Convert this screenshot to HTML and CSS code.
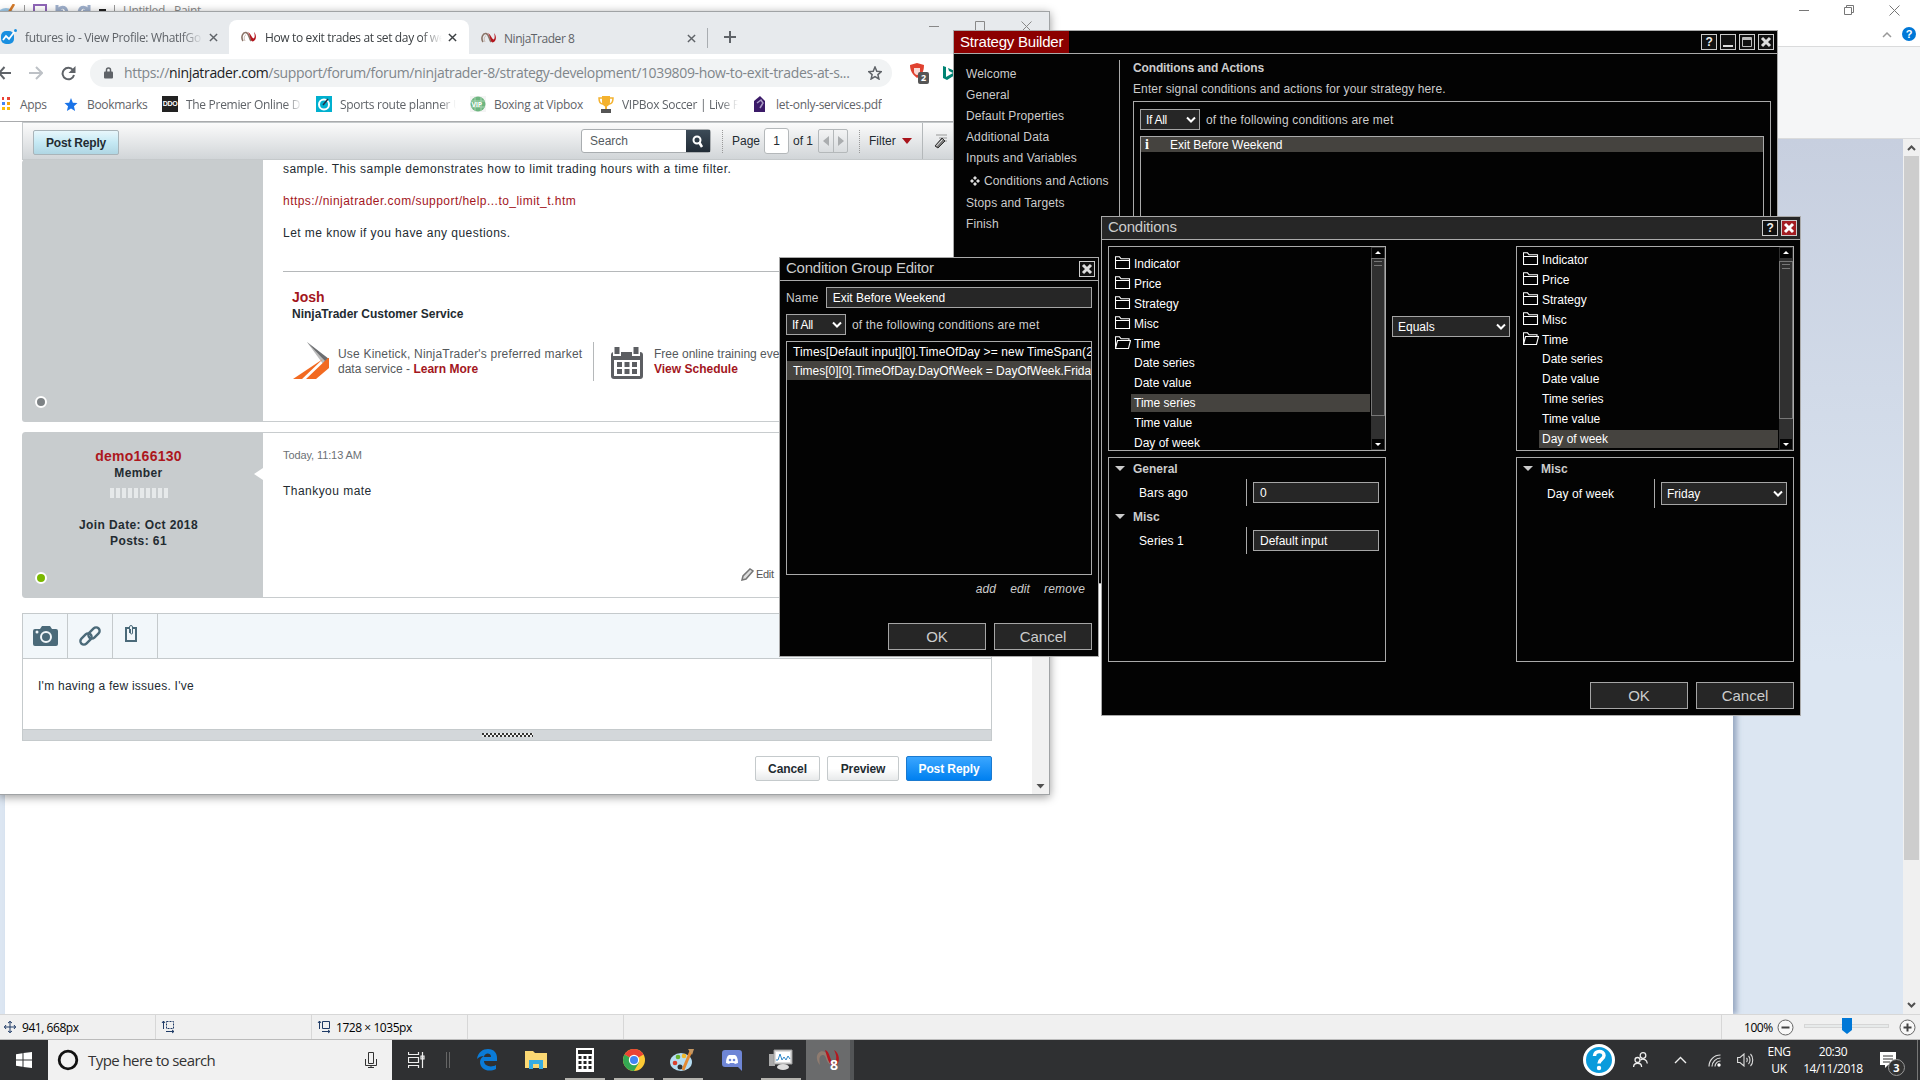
FILE: index.html
```html
<!DOCTYPE html>
<html lang="en">
<head>
  <meta charset="UTF-8" />
  <title>Desktop</title>
  <link rel="stylesheet" href="styles.css">
</head>
<body>
  <!-- shared icons -->
  <svg class="sprite">
    <symbol id="folder" viewBox="0 0 16 14"><path d="M.5 12.5V.8h4l1.6 2h8.4v9.7zM.5 4.5h14" fill="none" stroke="#fff" stroke-width="1.1"/></symbol>
    <symbol id="folder-open" viewBox="0 0 16 14"><path d="M.5 12.5V.8h4l1.6 2h7.9v1.7M.5 12.5l2-8h13l-2 8z" fill="none" stroke="#fff" stroke-width="1.1"/></symbol>
    <symbol id="chev" viewBox="0 0 10 8"><path d="M1 1.5l4 4 4-4" fill="none" stroke="#fff" stroke-width="2"/></symbol>
    <symbol id="cross" viewBox="0 0 10 10"><path d="M1 1l8 8M9 1L1 9" fill="none" stroke="currentColor" stroke-width="1.6"/></symbol>
    <symbol id="ninja" viewBox="0 0 16 14"><path d="M2 11C-.5 7 2 2 5 2.500C8 3 8 8 10 11" fill="none" stroke="#8a7468" stroke-width="1.600"/><path d="M4 11C2.500 8 3.500 5 5 5" fill="none" stroke="#c9b9b0"/><path d="M6.500 2C9 3 9 11 11.500 11.500C15.500 11 16 5 13 2C14 5 14 8 12.500 8.500C11 8 9.500 3 6.500 2z" fill="#b3161e"/></symbol>
  </svg>

  <div class="desktop">
    <!-- Paint -->
    <div class="paint">
      <div class="paint-title">
        <div class="quick">
          <svg width="16" height="16"><ellipse cx="6" cy="10" rx="8" ry="6" fill="#9fc9e8"/><circle cx="4" cy="9" r="2" fill="#3c9b3a"/><circle cx="9" cy="9" r="2" fill="#d9a12c"/><path d="M8 10l6-10" stroke="#d57b2a" stroke-width="2.500"/></svg>
          <i></i>
          <svg width="14" height="14"><path d="M1 1h12v12H1z" fill="#fff" stroke="#8f66b8" stroke-width="2"/></svg>
          <svg width="14" height="14"><path d="M2 1v6h6M3 6c4-5 9-3 9 4" fill="none" stroke="#9fb0cc" stroke-width="3"/></svg>
          <svg width="14" height="14"><path d="M12 1v6H6M11 6C7 1 2 3 2 10" fill="none" stroke="#9fb0cc" stroke-width="3"/></svg>
          <b></b>
          <i></i>
          <span>Untitled - Paint</span>
        </div>
        <div class="paint-controls">
          <svg width="11" height="11"><path d="M0 5.500h10" stroke="#777"/></svg>
          <svg width="11" height="11"><path d="M.5 2.500h7v7h-7zM2.500 2.500v-2h7v7h-2" fill="none" stroke="#777"/></svg>
          <svg width="11" height="11"><path d="M.5.5l10 10M10.500.5l-10 10" stroke="#777"/></svg>
        </div>
      </div>
      <div class="paint-tabs">
        <svg width="10" height="7"><path d="M1 6l4-4 4 4" fill="none" stroke="#999" stroke-width="1.500"/></svg>
        <span class="help-dot">?</span>
      </div>
      <div class="ribbon"></div>
      <div class="work">
        <div class="canvas"></div>
        <div class="scroll">
          <svg width="17" height="17"><path d="M5 11l3.500-3.500L12 11" fill="none" stroke="#505050" stroke-width="2"/></svg>
          <div class="scroll-thumb"></div>
          <svg width="17" height="17"><path d="M5 6l3.500 3.500L12 6" fill="none" stroke="#505050" stroke-width="2"/></svg>
        </div>
      </div>
      <div class="status">
        <div class="cell first"><svg width="12" height="12"><path d="M0 6h12M6 0v12M2 4L.5 6 2 8M10 4l1.500 2L10 8M4 2L6 .5 8 2M4 10l2 1.500L8 10" fill="none" stroke="#1f3b66"/></svg><span>941, 668px</span></div>
        <div class="cell"><svg width="15" height="14"><path d="M2.500 1v8M1 3l1.500-2L4 3M5 11.500h8M11 10l2 1.500-2 1.500" fill="none" stroke="#1f3b66"/><path d="M5.500 1.500h7v7h-7z" fill="none" stroke="#1f3b66" stroke-dasharray="2 1"/></svg></div>
        <div class="cell"><svg width="15" height="14"><path d="M2.500 1v8M1 3l1.500-2L4 3M5 11.500h8M11 10l2 1.500-2 1.500M5.500 1.500h7v7h-7z" fill="none" stroke="#1f3b66"/></svg><span>1728 × 1035px</span></div>
        <div class="cell"></div>
        <div class="zoom">
          <span>100%</span>
          <svg width="17" height="17"><circle cx="8.500" cy="8.500" r="7.500" fill="#f8f8f8" stroke="#666"/><path d="M4.500 8.500h8" stroke="#444" stroke-width="2"/></svg>
          <div class="slider"><b></b></div>
          <svg width="17" height="17"><circle cx="8.500" cy="8.500" r="7.500" fill="#f8f8f8" stroke="#666"/><path d="M4.500 8.500h8M8.500 4.500v8" stroke="#444" stroke-width="2"/></svg>
        </div>
      </div>
    </div>

    <!-- Chrome -->
    <div class="chrome">
      <div class="tabs">
        <div class="tab tab-one">
          <svg width="16" height="16"><rect x="0" y="2" width="13" height="13" rx="5" fill="#1a8fe0"/><path d="M2 11l3-4 3 3 6-8" fill="none" stroke="#fff" stroke-width="1.800"/><circle cx="14.500" cy="1.500" r="1.500" fill="#1a8fe0"/></svg>
          <span>futures io - View Profile: WhatIfGo</span>
          <svg class="x" width="9" height="9"><use href="#cross"/></svg>
        </div>
        <div class="tab active">
          <svg width="16" height="14"><use href="#ninja"/></svg>
          <span>How to exit trades at set day of we</span>
          <svg class="x" width="9" height="9"><use href="#cross"/></svg>
        </div>
        <div class="tab tab-three">
          <svg width="16" height="14"><use href="#ninja"/></svg>
          <span>NinjaTrader 8</span>
          <svg class="x" width="9" height="9"><use href="#cross"/></svg>
        </div>
        <svg class="plus" width="12" height="12"><path d="M6 0v12M0 6h12" stroke="#5f6368" stroke-width="2"/></svg>
        <div class="chrome-controls">
          <svg width="11" height="11"><path d="M0 5.500h10" stroke="#888"/></svg>
          <svg width="11" height="11"><path d="M.5.5h9v9h-9z" fill="none" stroke="#888"/></svg>
          <svg width="11" height="11"><path d="M.5.500l10 10M10.500.5l-10 10" stroke="#888"/></svg>
        </div>
      </div>
      <div class="address">
        <svg width="12" height="14"><path d="M0 7h11M-1 7l5.500-6M-1 7l5.500 6" fill="none" stroke="#5f6368" stroke-width="2"/></svg>
        <svg class="fwd" width="14" height="14"><path d="M0 7h13M7 1l6 6-6 6" fill="none" stroke="#bdc1c6" stroke-width="2"/></svg>
        <svg class="reload" width="15" height="15"><path d="M12 4A5.800 5.800 0 1 0 13 9" fill="none" stroke="#5f6368" stroke-width="2"/><path d="M14.500 0v7h-7z" fill="#5f6368"/></svg>
        <div class="omnibox">
          <svg width="9" height="12"><path d="M2.500 5V3a2 2 0 0 1 4 0v2" fill="none" stroke="#5f6368" stroke-width="1.500"/><rect x="0" y="4.500" width="9" height="7" rx="1" fill="#5f6368"/></svg>
          <span class="url">https://<b>ninjatrader.com</b>/support/forum/forum/ninjatrader-8/strategy-development/1039809-how-to-exit-trades-at-s...</span>
          <svg class="star" width="14" height="14" viewBox="0 0 14 14"><path d="M7 1l1.800 4.200 4.500.4-3.400 3 1 4.400L7 10.700 3.100 13l1-4.400-3.400-3 4.500-.4z" fill="none" stroke="#5f6368" stroke-width="1.500"/></svg>
        </div>
        <div class="ext">
          <svg width="22" height="22"><path d="M7 1l7 2c0 6-2 10-7 13C3 13 0 9 0 3z" fill="#e0412f"/><path d="M4 6h6v4c0 1-2 3-3 3s-3-2-3-3z" fill="#fff" opacity=".8"/></svg>
          <b>2</b>
        </div>
        <svg class="bing" width="12" height="14"><path d="M0 0l3 1v10l7-4-4-2-1-3 7 3v4l-8 5-4-2z" fill="#008373"/></svg>
      </div>
      <div class="bookmarks">
        <div class="mark apps"><svg width="10" height="14"><path d="M0 0h2v3H0zM5 0h3v3H5z" fill="#ea4335"/><path d="M0 5h3v3H0z" fill="#4285f4"/><path d="M5 5h3v3H5z" fill="#f4a30b"/><path d="M0 10h3v3H0zM5 10h3v3H5z" fill="#fbbc05"/></svg><span>Apps</span></div>
        <div class="mark book"><svg width="14" height="13" viewBox="0 0 14 14"><path d="M7 0l2 5 5 .4-3.800 3.400L11.400 14 7 11.200 2.600 14l1.200-5.200L0 5.400 5 5z" fill="#1a73e8"/></svg><span>Bookmarks</span></div>
        <div class="mark ddo"><b>DDO</b><span>The Premier Online D</span></div>
        <div class="mark sport"><svg width="16" height="16"><rect width="16" height="16" fill="#00b0cf"/><circle cx="8" cy="8.500" r="5" fill="none" stroke="#fff" stroke-width="2"/><path d="M7 9l5-6" stroke="#234" stroke-width="1.500"/></svg><span>Sports route planner U</span></div>
        <div class="mark box"><svg width="16" height="16"><rect width="16" height="16" fill="#f4f4f4"/><circle cx="8" cy="8" r="7.500" fill="#6db57f"/><path d="M1 5h14M1 11h14M5 1v14M11 1v14" stroke="#a9d4b3"/><text x="1.500" y="10.500" font-size="7" font-weight="bold" fill="#fff">VIP</text></svg><span>Boxing at Vipbox</span></div>
        <div class="mark cup"><svg width="16" height="17"><path d="M4 0h8v6c0 3-2 4-4 5-2-1-4-2-4-5zM1 2h3M12 2h3M7 10h2v4H7z" fill="#f4b22e"/><path d="M4 2H1c0 4 1 6 4 6M12 2h3c0 4-1 6-4 6" fill="none" stroke="#f4b22e" stroke-width="1.500"/><path d="M3 13h10v4H3z" fill="#555"/></svg><span>VIPBox Soccer | Live F</span></div>
        <div class="mark pdf"><svg width="12" height="16"><path d="M0 5l6-5 5 5v11H0z" fill="#3b1a68"/><path d="M3 7l4-3 2 3-3 5" fill="none" stroke="#a99bc5" stroke-width="1.500"/></svg><span>let-only-services.pdf</span></div>
      </div>
      <div class="page">
        <div class="forum">
          <div class="forum-bar">
            <span class="reply-btn">Post Reply</span>
            <div class="search"><span>Search</span><b><svg width="12" height="13"><circle cx="5" cy="5" r="3.500" fill="none" stroke="#fff" stroke-width="2"/><path d="M7 7l3 5" stroke="#fff" stroke-width="2.500"/></svg></b></div>
            <i class="dots"></i>
            <span class="pg">Page</span><span class="pg-num">1</span><span class="pg-of">of 1</span>
            <div class="pager"><svg width="14" height="22"><path d="M10 6v10L4 11z" fill="#aaadaf"/></svg><svg width="14" height="22"><path d="M4 6v10l6-5z" fill="#aaadaf"/></svg></div>
            <i class="dots"></i>
            <span class="filter">Filter</span><i class="tri-red"></i>
            <div class="gavel"><svg width="14" height="16"><path d="M2 2h11M5 5h8M8 8h5" stroke="#999"/><path d="M1 13l7-8 3 3-7 7z" fill="#777" stroke="#333"/><path d="M2.500 13l6-6.500" stroke="#eee"/></svg></div>
          </div>
          <div class="post post-one">
            <div class="author"><i class="dot"></i></div>
            <div class="body">
              <p>sample. This sample demonstrates how to limit trading hours with a time filter.</p>
              <p class="link">https://ninjatrader.com/support/help...to_limit_t.htm</p>
              <p>Let me know if you have any questions.</p>
              <div class="sig">
                <h4>Josh</h4>
                <h5>NinjaTrader Customer Service</h5>
                <div class="promo">
                  <svg width="37" height="38"><path d="M14 0l22 17v7l-5-3z" fill="#6b6d70"/><path d="M14 0l18 19-2 3z" fill="#bbb"/><path d="M36 16v10L23 37H13l22-21zM30 17L9 37H0z" fill="#f26a21"/></svg>
                  <div class="promo-text kin"><span>Use Kinetick, NinjaTrader's preferred market</span><br>data service - <b>Learn More</b></div>
                  <div class="promo-line"></div>
                  <svg width="32" height="33"><path d="M3 5h26a3 3 0 0 1 3 3v21a3 3 0 0 1-3 3H3a3 3 0 0 1-3-3V8a3 3 0 0 1 3-3z" fill="#5c5e62"/><path d="M3 13h26v16H3z" fill="#fff"/><path d="M6 3v6M25 3v6" stroke="#fff" stroke-width="8"/><path d="M6 0v7M25 0v7" stroke="#5c5e62" stroke-width="5"/><path d="M6 15h5v5H6zM13.500 15h5v5h-5zM21 15h5v5h-5zM6 22h5v5H6zM13.500 22h5v5h-5zM21 22h5v5h-5z" fill="#5c5e62"/></svg>
                  <div class="promo-text">Free online training events<br><b>View Schedule</b></div>
                </div>
              </div>
            </div>
          </div>
          <div class="post post-two">
            <div class="author">
              <div class="user">demo166130</div>
              <div class="rank">Member</div>
              <div class="rep"></div>
              <div class="rank">Join Date: Oct 2018<br>Posts: 61</div>
              <i class="dot online"></i>
              <i class="notch"></i>
            </div>
            <div class="body">
              <div class="when">Today, 11:13 AM</div>
              <p>Thankyou mate</p>
              <div class="edit"><svg width="13" height="13"><path d="M1 12l1-4L9 1l3 2-7 8z" fill="#ddd" stroke="#777" stroke-width="1.500"/></svg>Edit</div>
            </div>
          </div>
          <div class="editor">
            <div class="editor-bar">
              <span><svg width="25" height="20"><path d="M2 3h5l2-3h8l2 3h4a2 2 0 0 1 2 2v13a2 2 0 0 1-2 2H2a2 2 0 0 1-2-2V5a2 2 0 0 1 2-2z" fill="#4b6a79"/><circle cx="13" cy="11" r="5" fill="none" stroke="#f2f7fa" stroke-width="2"/><circle cx="4" cy="6" r="1.500" fill="#f2f7fa"/></svg></span>
              <span><svg width="24" height="20" viewBox="0 0 24 20"><g fill="none" stroke="#4b6a79" stroke-width="2.400"><rect x="-6.500" y="-3.500" width="13" height="7" rx="3.500" transform="translate(8 13) rotate(-45)"/><rect x="-6.500" y="-3.500" width="13" height="7" rx="3.500" transform="translate(16 7) rotate(-45)"/></g></svg></span>
              <span><svg class="clip" width="13" height="17"><path d="M1 3h10v13H1z" fill="none" stroke="#4b6a79" stroke-width="2"/><path d="M4.500 8V2a1.500 1.500 0 0 1 3 0v6a1 1 0 0 1-2 0V4" fill="#f2f7fa" stroke="#4b6a79"/></svg></span>
            </div>
            <div class="editor-text">I'm having a few issues. I've</div>
            <div class="grip"><i></i></div>
          </div>
          <div class="actions"><span>Cancel</span><span class="preview">Preview</span><span class="primary">Post Reply</span></div>
        </div>
        <div class="page-scroll"><svg width="17" height="17"><path d="M4.500 7h8l-4 4.500z" fill="#505050"/></svg></div>
      </div>
    </div>

    <!-- Strategy Builder -->
    <div class="nt strategy">
      <div class="nt-title"><span class="red">Strategy Builder</span>
        <div class="nt-btns"><b>?</b><b><svg width="14" height="14"><path d="M2 11h10" stroke="#ddd" stroke-width="2"/></svg></b><b><svg width="14" height="14"><path d="M2.500 2.500h9v9h-9zM2 4h10" fill="none" stroke="#bbb"/><path d="M2 3h10v2H2z" fill="#bbb"/></svg></b><b><svg width="14" height="14"><path d="M3 3l8 8M11 3l-8 8" stroke="#ddd" stroke-width="3"/></svg></b></div>
      </div>
      <div class="sb">
        <div class="sb-nav">
          <div>Welcome</div><div>General</div><div>Default Properties</div><div>Additional Data</div><div>Inputs and Variables</div>
          <div class="current"><svg width="10" height="10"><path d="M5 0l2 2-2 2-2-2zM5 6l2 2-2 2-2-2zM0 5l2-2 2 2-2 2zM6 5l2-2 2 2-2 2z" fill="#ddd"/></svg>Conditions and Actions</div>
          <div>Stops and Targets</div><div>Finish</div>
        </div>
        <div class="sb-main">
          <h3>Conditions and Actions</h3>
          <div class="sub">Enter signal conditions and actions for your strategy here.</div>
          <div class="sb-panel">
            <div class="row"><div class="select if">If All<svg width="10" height="8"><use href="#chev"/></svg></div><span>of the following conditions are met</span></div>
            <div class="sb-list"><div class="hit"><i>i</i><span>Exit Before Weekend</span></div></div>
          </div>
        </div>
      </div>
    </div>

    <!-- Condition Group Editor -->
    <div class="nt group">
      <div class="nt-title"><span>Condition Group Editor</span>
        <div class="nt-btns"><b><svg width="14" height="14"><path d="M3 3l8 8M11 3l-8 8" stroke="#ddd" stroke-width="3"/></svg></b></div>
      </div>
      <div class="group-body">
        <div class="row name"><span>Name</span><div class="input">Exit Before Weekend</div></div>
        <div class="row"><div class="select if">If All<svg width="10" height="8"><use href="#chev"/></svg></div><span>of the following conditions are met</span></div>
        <div class="group-list">
          <div class="times">Times[Default input][0].TimeOfDay &gt;= new TimeSpan(20, 0, 0)</div>
          <div class="sel">Times[0][0].TimeOfDay.DayOfWeek = DayOfWeek.Friday</div>
        </div>
        <div class="links"><span>add</span><span>edit</span><span>remove</span></div>
        <div class="buttons"><span>OK</span><span>Cancel</span></div>
      </div>
    </div>

    <!-- Conditions -->
    <div class="nt conditions">
      <div class="nt-title grey"><span>Conditions</span>
        <div class="nt-btns"><b>?</b><b class="close"><svg width="14" height="14"><path d="M3 3l8 8M11 3l-8 8" stroke="#fff" stroke-width="3"/></svg></b></div>
      </div>
      <div class="cond-body">
        <div class="col">
          <div class="tree tree-left">
            <div class="items">
              <div><svg width="16" height="14"><use href="#folder"/></svg>Indicator</div>
              <div><svg width="16" height="14"><use href="#folder"/></svg>Price</div>
              <div><svg width="16" height="14"><use href="#folder"/></svg>Strategy</div>
              <div><svg width="16" height="14"><use href="#folder"/></svg>Misc</div>
              <div><svg width="16" height="14"><use href="#folder-open"/></svg>Time</div>
              <div class="leaf">Date series</div>
              <div class="leaf">Date value</div>
              <div class="leaf sel">Time series</div>
              <div class="leaf">Time value</div>
              <div class="leaf">Day of week</div>
            </div>
            <div class="bar"><i class="up"></i><b></b><i class="down"></i></div>
          </div>
          <div class="props">
            <h4>General</h4>
            <div class="prop"><span>Bars ago</span><div class="input">0</div></div>
            <h4>Misc</h4>
            <div class="prop"><span>Series 1</span><div class="input">Default input</div></div>
          </div>
        </div>
        <div class="middle"><div class="select wide">Equals<svg width="10" height="8"><use href="#chev"/></svg></div></div>
        <div class="col">
          <div class="tree tree-right">
            <div class="items">
              <div><svg width="16" height="14"><use href="#folder"/></svg>Indicator</div>
              <div><svg width="16" height="14"><use href="#folder"/></svg>Price</div>
              <div><svg width="16" height="14"><use href="#folder"/></svg>Strategy</div>
              <div><svg width="16" height="14"><use href="#folder"/></svg>Misc</div>
              <div><svg width="16" height="14"><use href="#folder-open"/></svg>Time</div>
              <div class="leaf">Date series</div>
              <div class="leaf">Date value</div>
              <div class="leaf">Time series</div>
              <div class="leaf">Time value</div>
              <div class="leaf sel">Day of week</div>
            </div>
            <div class="bar"><i class="up"></i><b></b><i class="down"></i></div>
          </div>
          <div class="props">
            <h4>Misc</h4>
            <div class="prop tall"><span>Day of week</span><div class="select">Friday<svg width="10" height="8"><use href="#chev"/></svg></div></div>
          </div>
        </div>
      </div>
      <div class="buttons"><span>OK</span><span>Cancel</span></div>
    </div>

    <!-- Taskbar -->
    <div class="taskbar">
      <div class="start"><svg width="16" height="16"><path d="M0 2.300l6.500-1v6.200H0zM7.500 1.100L16 0v7.500H7.500zM0 8.500h6.500v6.200l-6.500-1zM7.500 8.500H16V16l-8.500-1.100z" fill="#fff"/></svg></div>
      <div class="cortana">
        <svg width="22" height="22"><circle cx="11" cy="11" r="8.800" fill="none" stroke="#111" stroke-width="2.800"/></svg>
        <span>Type here to search</span>
        <svg class="mic" width="12" height="16"><path d="M3.500.5h5v11h-5zM.5 7v6.500h11V7M6 13.500V16M3 15.500h6" fill="none" stroke="#333"/></svg>
      </div>
      <div class="taskview"><svg width="17" height="16"><path d="M.5 0v2.500h10V0M.5 5.500h10v5H.5zM.5 16v-2.500h10V16M14.500 0v16M13 4h3v3h-3z" fill="none" stroke="#eee" stroke-width="1.200"/></svg><i></i></div>
      <div class="apps-row">
        <div><svg width="22" height="22" viewBox="0 0 22 22"><path d="M1 10C2 3 7 0 12 0c6 0 9 4 9 9v3H8c0 5 7 7 12 4v4c-8 4-16 0-16-7 0-3 2-5 4-6-3 0-5 1-7 3zm7-2h7c0-5-7-4-7 0z" fill="#0a7bd8"/></svg></div>
        <div><svg width="22" height="20"><path d="M0 1h8l2 2h12v15H0z" fill="#fbd873"/><path d="M4 10h14v9h-4v-5H8v5H4z" fill="#35ace3"/></svg></div>
        <div class="open"><svg width="18" height="24"><path d="M0 0h18v24H0z" fill="#fff"/><path d="M2 2h14v4H2z" fill="#222"/><path d="M2.500 9.500h14M2.500 14.500h14M2.500 19.500h14" stroke="#222" stroke-width="3" stroke-dasharray="3 2"/></svg></div>
        <div class="open"><svg width="22" height="22" viewBox="-11 -11 22 22"><circle r="11" fill="#fcc934"/><path d="M0 0L-9.500-5.500A11 11 0 0 1 9.500-5.500z" fill="#ea4335"/><path d="M0 0L-9.500-5.500A11 11 0 0 0 0 11l5-8.500z" fill="#34a853"/><circle r="5.200" fill="#fff"/><circle r="4" fill="#4285f4"/></svg></div>
        <div class="open"><svg width="26" height="24"><ellipse cx="11" cy="14" rx="11" ry="9" fill="#b5dcf2"/><circle cx="5" cy="15" r="2.300" fill="#d8402f"/><circle cx="8" cy="9" r="2.300" fill="#64b32f"/><circle cx="14" cy="8" r="2.300" fill="#f0b92c"/><circle cx="10" cy="19" r="2.500" fill="#303234"/><path d="M13 22l8-19" stroke="#e38a32" stroke-width="3"/><path d="M18 1l6 0-2 6z" fill="#c69762"/></svg></div>
        <div><svg width="20" height="21"><path d="M3 0h14a3 3 0 0 1 3 3v18l-4-4H3a3 3 0 0 1-3-3V3a3 3 0 0 1 3-3z" fill="#6f86d6"/><path d="M4 13c0-4 1-7 3-8h6c2 1 3 4 3 8l-3 1-1-1H8l-1 1z" fill="#fff"/><circle cx="8" cy="10" r="1.300" fill="#6f86d6"/><circle cx="12" cy="10" r="1.300" fill="#6f86d6"/></svg></div>
        <div class="open"><svg width="24" height="22"><path d="M0 5h6v12H0z" fill="#aaa"/><path d="M5 1h18v14H5z" fill="#ddd" stroke="#999"/><path d="M7 3h14v10H7z" fill="#fff"/><path d="M7 11h2l2-6 2 6 2-3 2 3 2-4 2 3" fill="none" stroke="#3188c8"/><ellipse cx="14" cy="18" rx="6" ry="3" fill="#ddd"/></svg></div>
        <div class="now"><svg width="26" height="24"><path d="M5 17C-2 9 4 1 10 4c4 3 3 9 6 13C10 14 12 7 8 7c-4 0-4 5-3 10z" fill="#8f7c70"/><path d="M10 2c5 1 5 12 9 14 3-3 3-9 0-14 5 3 7 11 2 16-7 2-9-10-11-16z" fill="#b5161e"/><text x="15" y="22" font-size="14" font-weight="bold" fill="#fff">8</text></svg></div>
      </div>
      <div class="tray">
        <svg class="t-help" width="32" height="32"><circle cx="16" cy="16" r="14.500" fill="#0a9bdc" stroke="#fff" stroke-width="3"/><path d="M11.500 12c0-6 9.500-6 9.500-.5 0 4-5 3.500-5 8" fill="none" stroke="#fff" stroke-width="3.500"/><circle cx="16" cy="24" r="2.200" fill="#fff"/></svg>
        <svg class="t-people" width="15" height="16"><g fill="none" stroke="#eee" stroke-width="1.300"><circle cx="10" cy="3.500" r="2.800"/><circle cx="4.500" cy="8" r="2.500"/><path d="M.6 15c0-5 8-5 8 0M7.500 8c3-2 6.500 0 6.800 3.500"/></g></svg>
        <svg class="t-chev" width="13" height="8"><path d="M1 7l5.500-5.500L12 7" fill="none" stroke="#eee" stroke-width="1.400"/></svg>
        <svg class="t-wifi" width="13" height="13"><g fill="none" stroke="#ddd" stroke-width="1.200"><path d="M1 12.500C1 6 6 1 12.500 1M4 12.500C4 8 8 4 12.500 4M7 12.500c0-3 2.500-5.500 5.500-5.500"/></g><circle cx="11" cy="11" r="1.700" fill="#fff"/></svg>
        <svg class="t-vol" width="17" height="14"><path d="M.6 4.500H3L7 1v12L3 9.500H.6zM9.500 5c1 1 1 3 0 4M11.500 3c2 2 2 6 0 8M13.500 1c3 3 3 9 0 12" fill="none" stroke="#ddd" stroke-width="1.100"/></svg>
        <div class="t-text lang">ENG<br>UK</div>
        <div class="t-text clock">20:30<br>14/11/2018</div>
        <div class="note"><svg width="17" height="17"><path d="M0 0h16v13H8l-3 3v-3H0z" fill="#fff"/><path d="M3 4h10M3 7h10M3 10h7" stroke="#333"/></svg><b>3</b></div>
        <i class="peek"></i>
      </div>
    </div>
  </div>
</body>
</html>
```
FILE: styles.css
```css
* {
  box-sizing: border-box;
}

body {
  margin: 0;
  overflow: hidden;
  font-family: "Liberation Sans", Arial, sans-serif;
  font-size: 12px;
}

h3, h4, h5, p {
  margin: 0;
}

svg {
  display: block;
  flex: none;
}

.sprite {
  display: none;
}

.desktop {
  position: relative;
  width: 1920px;
  height: 1080px;
  overflow: hidden;
}

/* Paint */
.paint {
  display: flex;
  flex-direction: column;
  height: 1040px;
  background: #fff;
}

.paint-title {
  display: flex;
  justify-content: space-between;
  height: 22px;
}

.quick {
  display: flex;
  gap: 8px;
  padding-top: 3px;
  font: 12px "Open Sans", sans-serif;
  letter-spacing: -.35px;
  color: #888;
}

.quick i {
  width: 1px;
  height: 12px;
  margin-top: 2px;
  background: #999;
}

.quick svg {
  margin-top: 1px;
}

.quick b {
  width: 7px;
  height: 2px;
  margin-top: 6px;
  background: #222;
}

.quick span {
  margin-top: -1px;
}

.paint-controls {
  display: flex;
  gap: 34px;
  padding: 5px 20px 0 0;
}

.paint-tabs {
  display: flex;
  justify-content: flex-end;
  align-items: center;
  gap: 10px;
  height: 25px;
  padding-right: 4px;
  border-bottom: 1px solid #dadbdc;
}

.help-dot {
  width: 14px;
  height: 14px;
  border-radius: 50%;
  background: #0078d7;
  color: #fff;
  font-size: 11px;
  font-weight: bold;
  line-height: 14px;
  text-align: center;
}

.ribbon {
  height: 92px;
  background: #f5f6f7;
  border-bottom: 1px solid #dadbdc;
}

.work {
  display: flex;
  justify-content: space-between;
  flex: 1;
  padding-left: 5px;
  background: linear-gradient(#c7cfdf, #dce6f2 60%);
}

.canvas {
  width: 1728px;
  background: #fff;
  box-shadow: 4px 0 5px rgba(110, 130, 165, .6);
}

.scroll {
  display: flex;
  flex-direction: column;
  width: 17px;
  background: #f0f0f0;
}

.scroll-thumb {
  height: 704px;
  margin: 0 1px auto;
  background: #cdcdcd;
}

.status {
  display: flex;
  height: 26px;
  background: #f0f0f0;
  border-top: 1px solid #d7d7d7;
  border-bottom: 1px solid #bbb;
  font: 12px "Open Sans", sans-serif;
  letter-spacing: -.45px;
}

.cell {
  display: flex;
  align-items: center;
  gap: 4px;
  width: 156px;
  padding-left: 5px;
  border-right: 1px solid #d7d7d7;
}

.cell.first {
  padding-left: 4px;
  gap: 6px;
}

.zoom {
  display: flex;
  align-items: center;
  width: 199px;
  margin-left: auto;
  padding-left: 22px;
  border-left: 1px solid #d7d7d7;
}

.zoom span {
  width: 33px;
}

.slider {
  width: 85px;
  height: 4px;
  margin: -2px 10px 0;
  padding-left: 37px;
  background: #e7eaea;
  border: 1px solid #d6d6d6;
}

.slider b {
  display: block;
  width: 10px;
  height: 16px;
  margin-top: -7px;
  background: #0078d7;
  clip-path: polygon(0 0, 100% 0, 100% 75%, 50% 100%, 0 75%);
}

/* Chrome */
.chrome {
  position: absolute;
  left: -1px;
  top: 11px;
  width: 1051px;
  height: 784px;
  display: flex;
  flex-direction: column;
  background: #fff;
  border: 1px solid #a0a3a5;
  box-shadow: 0 2px 9px rgba(0, 0, 0, .4);
  font-family: "Open Sans", sans-serif;
  color: #5f6368;
}

.tabs {
  display: flex;
  height: 42px;
  background: #e7eaed;
}

.tab {
  display: flex;
  align-items: center;
  width: 240px;
  height: 34px;
  margin-top: 8px;
  padding: 0 12px;
  font-size: 12px;
  letter-spacing: -.36px;
}

.tab span {
  flex: 1;
  margin: 0 6px 0 8px;
  overflow: hidden;
  white-space: nowrap;
  -webkit-mask-image: linear-gradient(to right, #000 88%, transparent);
}

.tab-one {
  width: 229px;
  padding: 0 11px 0 1px;
}

.tab.active {
  background: #fff;
  border-radius: 8px 8px 0 0;
  color: #3c4043;
}

.tab-three {
  width: 239px;
  height: 20px;
  margin: 16px 16px 0 0;
  padding-right: 11px;
  border-right: 1px solid #a9adb1;
  letter-spacing: -.45px;
}

.tab-three span {
  margin-left: 7px;
  -webkit-mask-image: none;
}

.plus {
  margin-top: 19px;
}

.chrome-controls {
  display: flex;
  gap: 35px;
  margin: 9px 17px 0 auto;
}

.address {
  display: flex;
  align-items: center;
  height: 37px;
  padding-top: 1px;
}

.fwd {
  margin-left: 17px;
}

.reload {
  margin-left: 18px;
}

.omnibox {
  display: flex;
  align-items: center;
  width: 802px;
  height: 28px;
  margin-left: 14px;
  padding: 0 10px 0 14px;
  border-radius: 14px;
  background: #f1f3f4;
}

.url {
  margin: -2px 0 0 11px;
  font-size: 14px;
  letter-spacing: -.34px;
  white-space: nowrap;
  color: #80868b;
}

.url b {
  font-weight: normal;
  color: #202124;
}

.star {
  margin-left: auto;
}

.ext {
  position: relative;
  width: 22px;
  height: 22px;
  margin-left: 18px;
}

.ext b {
  position: absolute;
  left: 8px;
  top: 10px;
  width: 11px;
  height: 12px;
  border-radius: 2px;
  background: #555;
  color: #fff;
  font-size: 9px;
  line-height: 12px;
  text-align: center;
}

.bing {
  margin-left: 11px;
}

.bookmarks {
  display: flex;
  align-items: center;
  height: 31px;
  border-bottom: 1px solid #a9abad;
  padding-bottom: 4px;
  font-size: 12px;
  letter-spacing: -.3px;
  white-space: nowrap;
}

.mark {
  display: flex;
  align-items: center;
  overflow: hidden;
}

.mark span {
  margin-left: 8px;
}

.apps { width: 64px; padding-left: 2px; }
.book { width: 98px; }
.book span { margin-left: 9px; }
.ddo { width: 154px; }
.sport { width: 154px; }
.box { width: 128px; }
.cup { width: 156px; }
.pdf span { margin-left: 10px; }

.ddo span,
.sport span,
.cup span {
  width: 116px;
  overflow: hidden;
  -webkit-mask-image: linear-gradient(to right, #000 86%, transparent);
}

.ddo b {
  width: 16px;
  height: 16px;
  background: #222;
  color: #fff;
  font: bold 7px/16px "Liberation Sans", sans-serif;
  letter-spacing: -.3px;
  text-align: center;
}

/* Forum page */
.page {
  display: flex;
  flex: 1;
  justify-content: space-between;
  font-family: "Liberation Sans", Arial, sans-serif;
  color: #232b31;
}

.forum {
  width: 970px;
  margin-left: 22px;
}

.forum-bar {
  display: flex;
  align-items: center;
  height: 38px;
  background: linear-gradient(#fbfbfb, #d1d5d8);
  border: 1px solid #c5c9cb;
  padding-left: 10px;
  white-space: nowrap;
}

.reply-btn {
  width: 86px;
  height: 25px;
  margin: 2px 462px 0 0;
  border: 1px solid #a9b4b9;
  border-radius: 2px;
  background: linear-gradient(#e8f7fc, #c5e9f4 50%, #b0d6e3);
  font-weight: bold;
  letter-spacing: -.2px;
  line-height: 24px;
  text-align: center;
}

.search {
  display: flex;
  width: 130px;
  height: 24px;
  border: 1px solid #a9adb0;
  border-radius: 3px;
  background: #fff;
  color: #555b60;
  line-height: 22px;
}

.search span {
  flex: 1;
  padding-left: 8px;
}

.search b {
  width: 24px;
  padding: 5px 0 0 6px;
  background: linear-gradient(#3c4b57, #222c36);
}

.dots {
  height: 23px;
  margin: 0 9px 0 11px;
  border-left: 1px dotted #999;
}

.pg {
  width: 32px;
}

.pg-num {
  width: 25px;
  height: 26px;
  margin-right: 4px;
  border: 1px solid #b4b8ba;
  border-radius: 3px;
  background: #fff;
  line-height: 25px;
  text-align: center;
}

.pg-of {
  width: 25px;
}

.pager {
  display: flex;
  width: 30px;
  height: 24px;
  border: 1px solid #b4b8ba;
  border-radius: 2px;
}

.pager svg + svg {
  border-left: 1px solid #b4b8ba;
}

.filter {
  width: 33px;
}

.tri-red {
  border: 5px solid transparent;
  border-top: 6px solid #a9141b;
  border-bottom: 0;
}

.gavel {
  display: flex;
  align-items: center;
  height: 36px;
  margin-left: 10px;
  padding-left: 11px;
  border-left: 1px solid #b4b8ba;
}

.post {
  display: flex;
  border: 1px solid #c8ccce;
  border-radius: 3px;
  background: #fff;
}

.post-one {
  height: 262px;
  border-top: 0;
}

.post-two {
  height: 166px;
  margin-top: 10px;
}

.author {
  position: relative;
  width: 240px;
  background: #c8ccce;
  padding: 15px 9px 0 0;
  font-weight: bold;
  text-align: center;
}

.post-one .author {
  padding: 0;
}

.user {
  color: #ad171d;
  font-size: 14px;
  line-height: 17px;
  letter-spacing: .25px;
}

.rank {
  font-size: 12px;
  line-height: 16px;
  letter-spacing: .4px;
}

.rep {
  width: 58px;
  height: 10px;
  margin: 7px auto 19px;
  background: repeating-linear-gradient(to right, #e6e9ea 0 4px, #c8ccce 4px 6px);
}

.dot {
  position: absolute;
  left: 12px;
  bottom: 13px;
  width: 12px;
  height: 12px;
  border: 2px solid #fff;
  border-radius: 50%;
  background: #7d8285;
}

.dot.online {
  background: #7ab800;
}

.notch {
  position: absolute;
  right: 0;
  top: 35px;
  border: 6px solid transparent;
  border-left: 0;
  border-right: 9px solid #fff;
}

.body {
  flex: 1;
  padding-left: 20px;
}

.body p {
  line-height: 17px;
  letter-spacing: .46px;
}

.post-one p {
  height: 32px;
}

.post-one p:first-child {
  margin-top: 1px;
}

.body .link {
  color: #a3161d;
}

.sig {
  margin-top: 14px;
  padding: 16px 0 0 9px;
  border-top: 1px solid #b5b8ba;
}

.sig h4 {
  color: #a3161d;
  font-size: 14px;
  line-height: 18px;
}

.sig h5 {
  font-size: 12px;
  line-height: 16px;
}

.promo {
  display: flex;
  height: 39px;
  margin-top: 20px;
  padding-left: 1px;
}

.promo-text {
  padding-top: 5px;
  line-height: 15px;
  color: #55595c;
  white-space: nowrap;
}

.kin {
  width: 255px;
  margin-left: 8px;
}

.kin span {
  letter-spacing: .19px;
}

.promo-line {
  width: 1px;
  margin-right: 17px;
  background: #b5b8ba;
}

.promo-line + svg {
  margin: 5px 11px 0 0;
}

.promo-text b {
  color: #a3161d;
}

.when {
  margin-top: 14px;
  color: #6c7175;
  font-size: 11px;
  line-height: 16px;
  letter-spacing: -.1px;
}

.when + p {
  margin-top: 20px;
}

.edit {
  display: flex;
  gap: 2px;
  margin: 68px 0 0 458px;
  color: #555;
  font-size: 11px;
  letter-spacing: -.3px;
}

.editor {
  margin-top: 15px;
  height: 128px;
  border: 1px solid #c5cacc;
}

.editor-bar {
  display: flex;
  height: 45px;
  background: #f2f7fa;
  border-bottom: 1px solid #c5cacc;
}

.editor-bar span {
  display: flex;
  align-items: center;
  justify-content: center;
  width: 45px;
  border-right: 1px solid #c5cacc;
}

.clip {
  margin: -5px 8px 0 0;
}

.editor-text {
  height: 70px;
  padding: 20px 15px;
  letter-spacing: .25px;
}

.grip {
  height: 11px;
  padding-top: 3px;
  background: #d3d7da;
  border-top: 1px solid #c5cacc;
}

.grip i {
  display: block;
  width: 51px;
  height: 5px;
  margin-left: 459px;
  background: repeating-linear-gradient(to right, #333 0 2px, #eee 2px 4px) 0 0 / 100% 2px no-repeat, repeating-linear-gradient(to right, #eee 0 2px, #333 2px 4px) 0 2px / 100% 2px no-repeat;
}

.actions {
  display: flex;
  justify-content: flex-end;
  gap: 7px;
  margin-top: 15px;
}

.actions span {
  width: 65px;
  height: 25px;
  border: 1px solid #c5cacc;
  border-radius: 2px;
  background: linear-gradient(#fff 50%, #e8eaeb);
  font-weight: bold;
  line-height: 24px;
  letter-spacing: -.1px;
  text-align: center;
}

.actions .preview {
  width: 72px;
}

.actions .primary {
  width: 86px;
  border-color: #1a7ad0;
  background: linear-gradient(#3aa6ff, #0080f0);
  color: #fff;
}

.page-scroll {
  display: flex;
  align-items: flex-end;
  width: 17px;
  background: #f1f1f1;
}

/* NinjaTrader windows */
.nt {
  position: absolute;
  display: flex;
  flex-direction: column;
  background: #030303;
  border: 1px solid #aaa;
  color: #ccc;
}

.nt-title {
  display: flex;
  align-items: center;
  justify-content: space-between;
  height: 23px;
  padding: 0 3px 0 6px;
  border-bottom: 1px solid #aaa;
  font-size: 15px;
  letter-spacing: -.22px;
}

.nt-title > span {
  line-height: 20px;
  margin-top: -2px;
}

.nt-title.grey {
  background: #262626;
}

.nt-title .red {
  height: 22px;
  margin: 0 0 0 -6px;
  padding: 0 6px;
  background: #8b0000;
  color: #fff;
  line-height: 21px;
}

.nt-btns {
  display: flex;
  gap: 3px;
}

.nt-btns b {
  width: 16px;
  height: 16px;
  border: 1px solid #ccc;
  background: #111;
  color: #eee;
  font-size: 12px;
  line-height: 14px;
  text-align: center;
}

.nt-btns .close {
  background: #a31d22;
}

.select,
.input {
  height: 21px;
  border: 1px solid #a5a5a5;
  background: #262626;
  color: #fff;
  line-height: 20px;
}

.select {
  display: flex;
  align-items: center;
  justify-content: space-between;
  width: 60px;
  padding: 0 3px 0 5px;
}

.if {
  letter-spacing: -.3px;
}

.input {
  padding-left: 6px;
}

.row {
  display: flex;
  align-items: center;
  gap: 6px;
}

.row > span {
  letter-spacing: .17px;
}

.buttons {
  display: flex;
  justify-content: flex-end;
  gap: 8px;
}

.buttons span {
  width: 98px;
  height: 27px;
  border: 1px solid #a5a5a5;
  background: #262626;
  font-size: 15px;
  line-height: 26px;
  text-align: center;
}

.strategy {
  left: 953px;
  top: 30px;
  width: 825px;
  height: 554px;
}

.sb {
  display: flex;
  flex: 1;
  padding-top: 6px;
}

.sb-nav {
  width: 166px;
  padding: 4px 0 0 12px;
  border-right: 1px solid #aaa;
  line-height: 21px;
  letter-spacing: .12px;
}

.sb-nav .current {
  display: flex;
  align-items: center;
  gap: 4px;
  height: 24px;
  padding-left: 4px;
  white-space: nowrap;
}

.sb-main {
  flex: 1;
  padding: 0 6px 0 13px;
}

.sb-main h3 {
  font-size: 12px;
  line-height: 16px;
  letter-spacing: -.15px;
}

.sub {
  margin: 5px 0 4px;
  line-height: 16px;
  letter-spacing: .11px;
}

.sb-panel {
  height: 460px;
  border: 1px solid #aaa;
  padding: 7px 6px;
}

.sb-list {
  height: 420px;
  margin-top: 6px;
  border: 1px solid #aaa;
}

.hit {
  display: flex;
  height: 15px;
  background: #45433f;
  color: #fff;
  line-height: 16px;
}

.hit i {
  width: 29px;
  padding-left: 4px;
  font: bold 14px/15px "Liberation Serif", serif;
}

.group {
  left: 779px;
  top: 257px;
  width: 320px;
  height: 400px;
}

.group-body {
  padding: 6px;
}

.name {
  gap: 7px;
  margin-bottom: 6px;
}

.name .input {
  flex: 1;
}

.group-list {
  height: 234px;
  margin-top: 6px;
  border: 1px solid #aaa;
  color: #fff;
}

.group-list div {
  height: 19px;
  padding-left: 6px;
  line-height: 20px;
  overflow: hidden;
  white-space: nowrap;
}

.group-list .times {
  letter-spacing: .12px;
}

.group-list .sel {
  background: #45433f;
}

.links {
  display: flex;
  justify-content: flex-end;
  gap: 14px;
  height: 48px;
  padding: 7px 7px 0 0;
  font-style: italic;
  letter-spacing: .15px;
}

.conditions {
  left: 1101px;
  top: 216px;
  width: 700px;
  height: 500px;
}

.cond-body {
  display: flex;
  justify-content: space-between;
  height: 442px;
  padding: 6px 6px 0;
}

.col {
  width: 278px;
}

.tree {
  display: flex;
  height: 205px;
  margin-bottom: 6px;
  border: 1px solid #aaa;
  overflow: hidden;
  color: #fff;
}

.items {
  flex: 1;
  padding: 7px 1px 0 6px;
}

.tree-right .items {
  padding-top: 3px;
}

.items div {
  display: flex;
  gap: 3px;
  height: 20px;
  line-height: 20px;
}

.items svg {
  margin-top: 2px;
}

.items .leaf {
  height: 18px;
  margin: 0 0 2px 16px;
  padding-left: 3px;
  line-height: 18px;
}

.items .sel {
  background: #45433f;
}

.bar {
  display: flex;
  flex-direction: column;
  width: 14px;
  background: #303030;
}

.bar i {
  height: 10px;
  margin: 1px 1px 0;
  background: #030303;
}

.bar .down {
  margin: auto 1px 1px;
}

.bar i::after {
  content: "";
  display: block;
  width: 0;
  margin: 0 auto;
  border: 3px solid transparent;
  border-bottom-color: #fff;
}

.bar .down::after {
  border-bottom-color: transparent;
  border-top-color: #fff;
  transform: translateY(4px);
}

.bar b {
  height: 158px;
  border: 1px solid #777;
  background: linear-gradient(#777, #777) 2px 2px / 8px 1px no-repeat, linear-gradient(#777, #777) 2px 6px / 8px 1px no-repeat, #303030;
}

.tree-right .bar b {
  margin-top: 3px;
}

.props {
  height: 205px;
  border: 1px solid #aaa;
}

.props h4 {
  display: flex;
  align-items: center;
  gap: 8px;
  height: 21px;
  padding-left: 6px;
  font-size: 12px;
}

.props h4::before {
  content: "";
  border: 5px solid transparent;
  border-top-color: #ccc;
  border-bottom: 0;
}

.prop {
  display: flex;
  align-items: center;
  height: 27px;
  padding-left: 30px;
  color: #fff;
}

.prop span {
  width: 108px;
  height: 27px;
  border-right: 1px solid #aaa;
  line-height: 28px;
  letter-spacing: .1px;
}

.prop .input,
.prop .select {
  width: 126px;
  margin-left: 6px;
}

.prop.tall,
.tall span {
  height: 29px;
  line-height: 30px;
}

.prop.tall .select {
  height: 23px;
  line-height: 22px;
}

.middle {
  width: 118px;
  padding-top: 70px;
}

.wide {
  width: 118px;
}

.conditions .buttons {
  padding-right: 6px;
}

/* Taskbar */
.taskbar {
  display: flex;
  height: 40px;
  background: #2f3032;
  color: #fff;
  font-family: "Open Sans", sans-serif;
}

.start {
  width: 48px;
  padding: 12px 16px;
}

.cortana {
  display: flex;
  align-items: center;
  width: 344px;
  padding: 0 15px 0 9px;
  background: #f1f1f1;
  color: #333;
  font-size: 15px;
  letter-spacing: -.57px;
}

.cortana span {
  margin-left: 9px;
}

.mic {
  margin-left: auto;
}

.taskview {
  display: flex;
  align-items: center;
  width: 70px;
  padding-left: 16px;
}

.taskview i {
  width: 4px;
  height: 16px;
  margin-left: 21px;
  border: solid #666;
  border-width: 0 1px;
}

.apps-row {
  display: flex;
}

.apps-row div {
  display: flex;
  align-items: center;
  justify-content: center;
  width: 49px;
}

.apps-row .open {
  background: linear-gradient(#b4b3ae, #b4b3ae) 50% 100% / 40px 2px no-repeat;
}

.apps-row .now {
  width: 48px;
  margin-left: 1px;
  background: #6a6b6c;
  border-right: 4px solid #535557;
}

.tray {
  display: flex;
  align-items: center;
  margin-left: auto;
  width: 337px;
}

.t-people { margin-left: 18px; }
.t-chev { margin-left: 26px; }
.t-wifi { margin-left: 21px; }
.t-vol { margin-left: 16px; }

.t-text {
  font-size: 12px;
  line-height: 17px;
  text-align: center;
  letter-spacing: -.4px;
}

.lang {
  width: 26px;
  margin-left: 12px;
}

.clock {
  width: 62px;
  margin-left: 10px;
}

.note {
  position: relative;
  width: 30px;
  margin-left: 16px;
}

.note b {
  position: absolute;
  left: 8px;
  top: 7px;
  width: 17px;
  height: 17px;
  border: 1px solid #999;
  border-radius: 50%;
  background: #333;
  font-size: 11px;
  line-height: 15px;
  text-align: center;
}

.peek {
  height: 40px;
  margin-left: 7px;
  border-left: 1px solid #777;
}
```
